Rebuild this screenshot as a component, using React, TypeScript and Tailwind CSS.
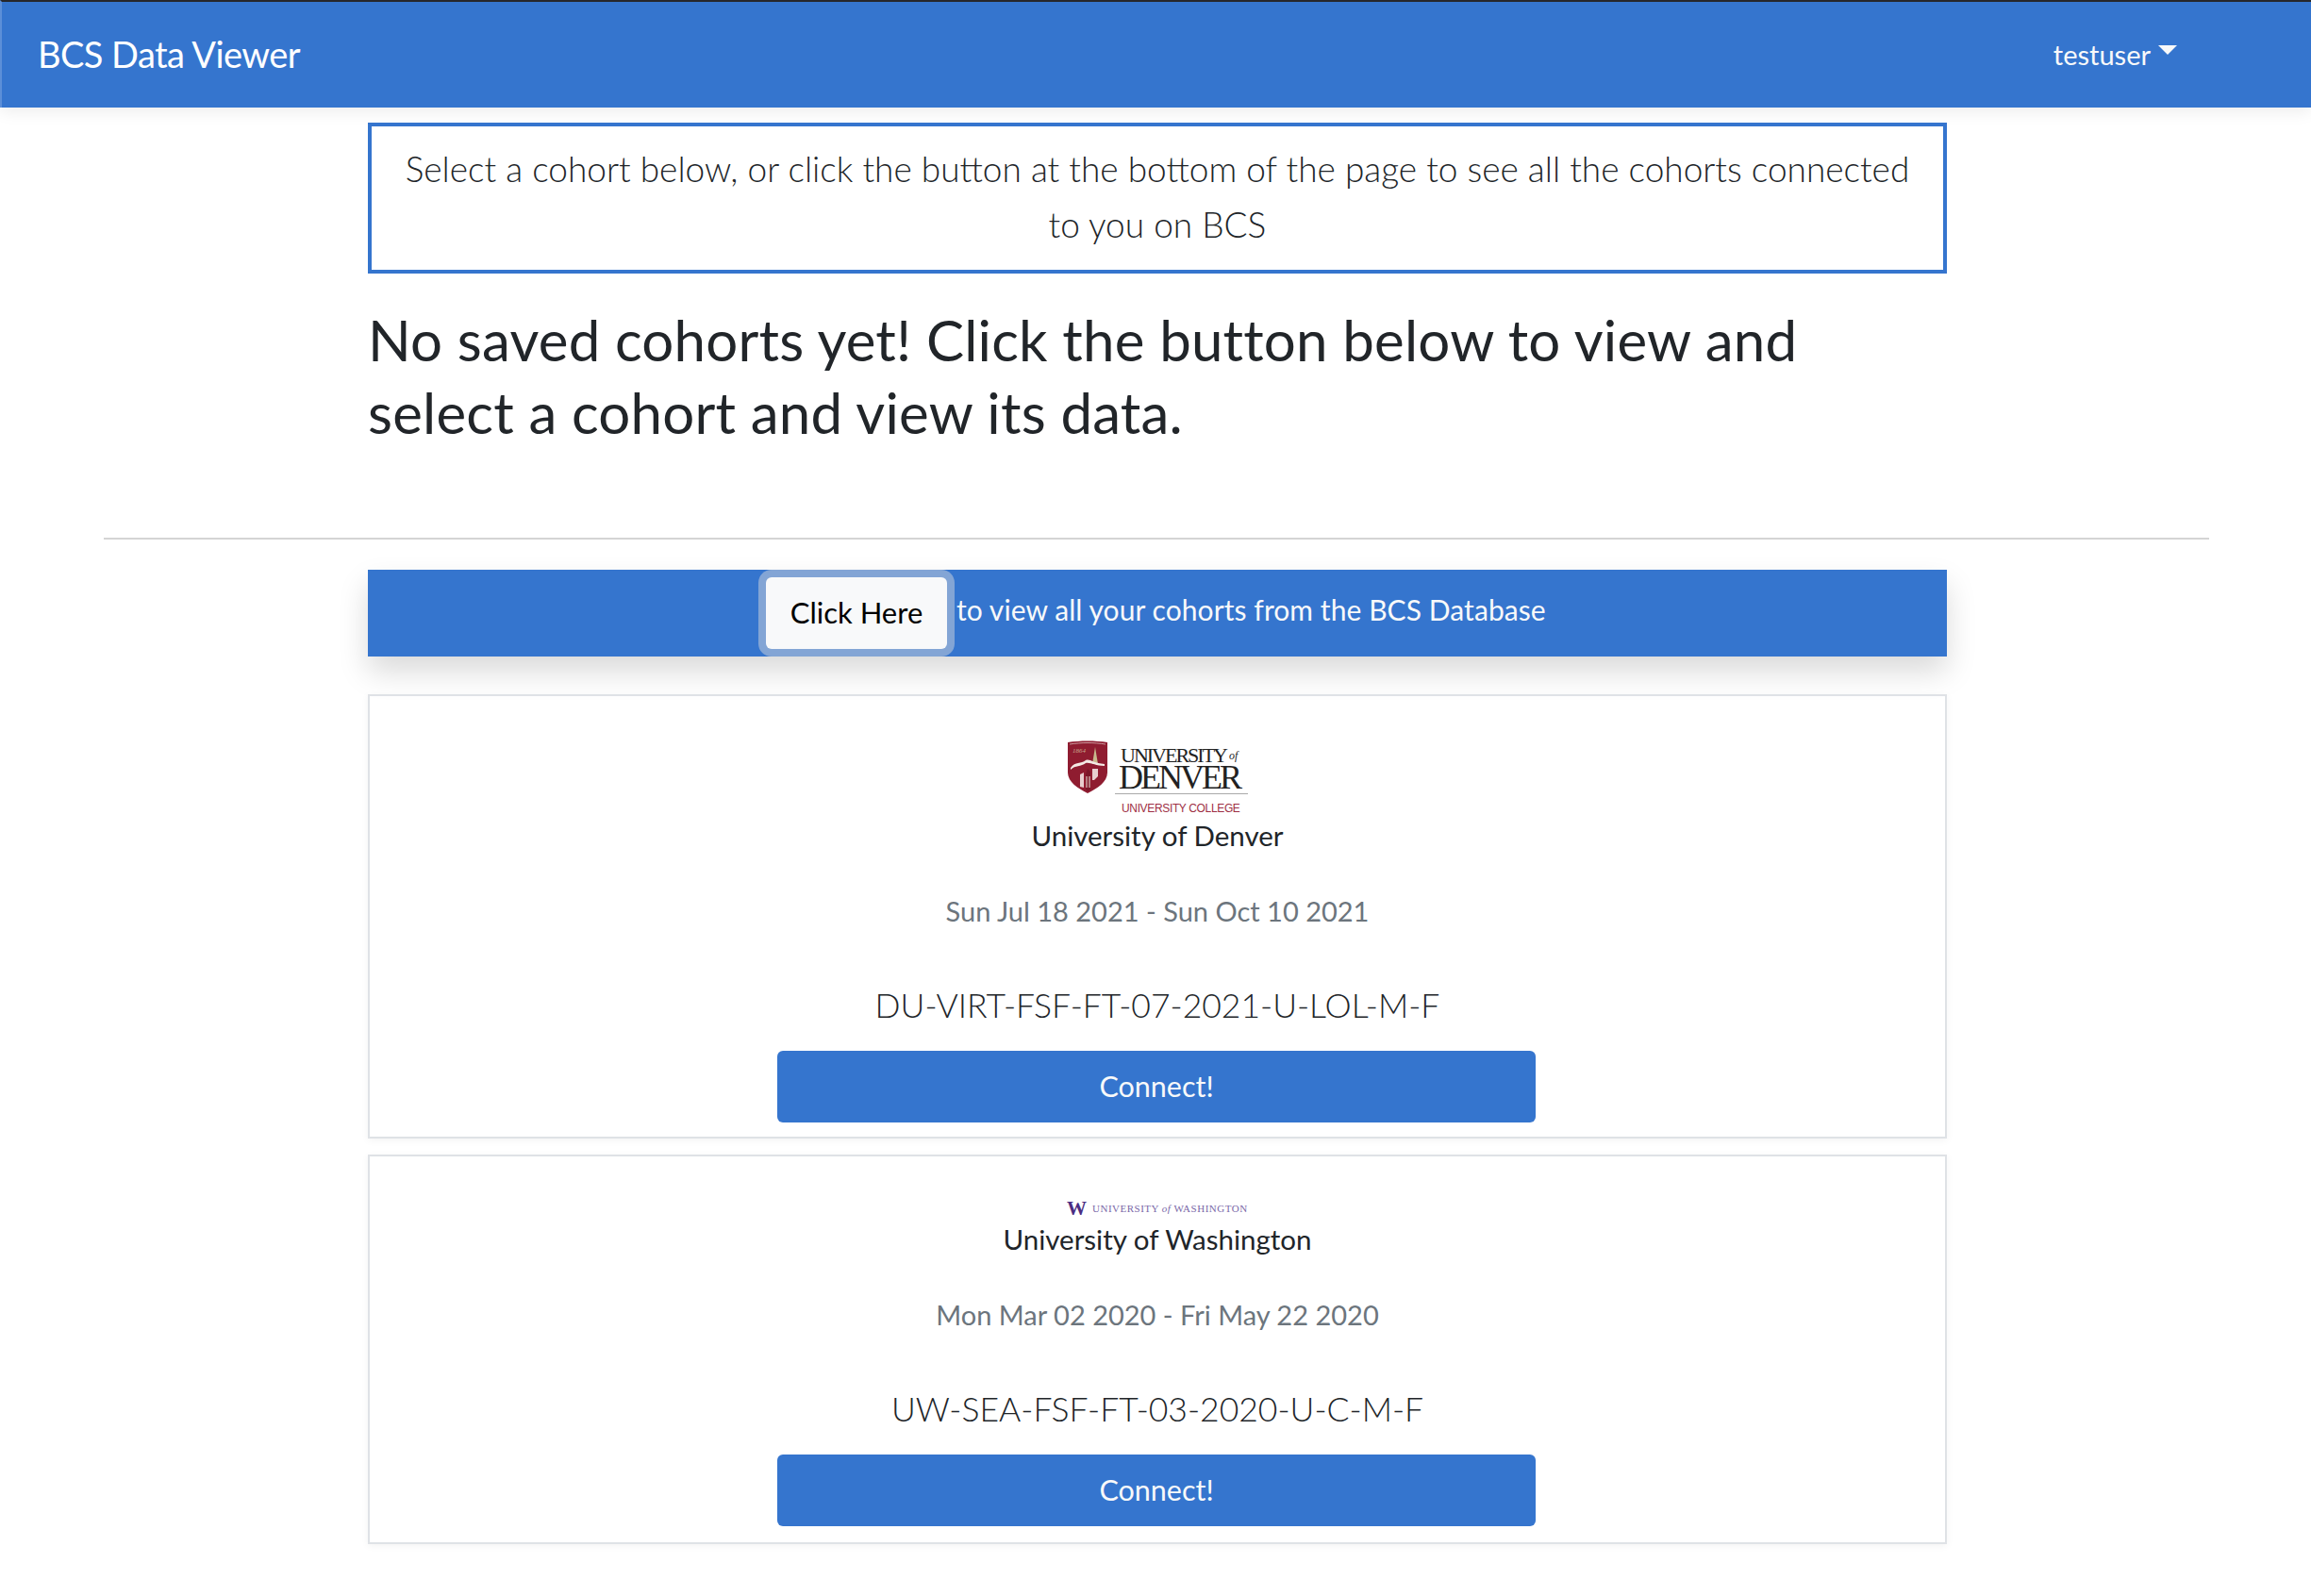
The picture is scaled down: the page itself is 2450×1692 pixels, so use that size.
const sans = "font-['Lato','Open_Sans',sans-serif]";

function DenverLogo() {
  return (
    <div className="flex h-[86px] w-[200px] items-start pl-[4px]">
      <svg width="44" height="57" viewBox="0 0 44 57" className="mt-[1px] shrink-0">
        <path d="M1 2 C14 0 30 0 43 2 L43 34 C43 44 32 51 22 56 C12 51 1 44 1 34 Z" fill="#8f1c30" />
        <path d="M3 4 C15 2 29 2 41 4" fill="none" stroke="#d9b9b9" strokeWidth="0.8" />
        <text x="6" y="13" fontSize="7" fontStyle="italic" fontFamily="Liberation Serif, serif" fill="#c9a98d">1864</text>
        <path d="M30 7 L33 25 L27 25 Z" fill="#c9b98d" />
        <path d="M4 29 C9 22 15 25 20 21 C24 19 28 24 40 25 L40 27 C30 27 25 23 20 24 C15 28 9 26 4 31 Z" fill="#f4e9e4" />
        <path d="M20 36 L22 30 L25 33 L25 52 L22 54 L20 52 Z" fill="#7b1628" />
        <path d="M14 49 L14 36 L18 34 L18 50 Z M27 30 L33 30 L33 38 L29 42 L27 42 Z" fill="#e8cfcf" />
        <path d="M21 38 L21 50 M24 38 L24 50" stroke="#f3e6da" strokeWidth="1" />
      </svg>
      <div className="ml-[7px] flex flex-col font-['Liberation_Serif',serif] text-[#222]">
        <div className="flex h-[27px] items-end pl-[6px] text-[22px] leading-[20px] tracking-[-2px]">
          UNIVERSITY<span className="ml-[3px] text-[12px] italic tracking-normal">of</span>
        </div>
        <div className="h-[27px] pl-[4px] text-[36px] leading-[27px] tracking-[-3px]">DENVER</div>
        <div className="mt-[3px] h-[1px] w-[141px] bg-[#aaa]" />
        <div className="pl-[7px] pt-[8px] font-['Liberation_Sans',sans-serif] text-[12px] leading-[15px] tracking-[-0.35px] text-[#9e3045]">UNIVERSITY COLLEGE</div>
      </div>
    </div>
  );
}

function WashingtonLogo() {
  return (
    <div className="flex h-[29px] w-[192px] items-start">
      <span className="font-['Liberation_Serif',serif] text-[21px] font-bold leading-[24px] text-[#4b2e83]">W</span>
      <span className="ml-[6px] whitespace-pre font-['Liberation_Serif',serif] text-[11px] leading-[24px] tracking-[0.5px] text-[#7a68a8]">
        UNIVERSITY <i>of</i> WASHINGTON
      </span>
    </div>
  );
}

function CohortCard({ logo, name, dates, code, className }: { logo: React.ReactNode; name: string; dates: string; code: string; className: string }) {
  return (
    <div className={`flex flex-col items-center border-2 border-[#dfe2e6] shadow-[0_2px_8px_rgba(0,0,0,0.05)] ${className}`}>
      {logo}
      <div className="text-[29.5px] leading-[32px] text-[#212529]">{name}</div>
      <div className="mt-[40px] text-[29px] leading-[48px] text-[#6c757d]">{dates}</div>
      <div className="mt-[52px] text-[35.5px] font-light leading-[48px] text-[#212529]">{code}</div>
      <button className="mr-[2px] mt-[24px] h-[76px] w-[804px] rounded-[6px] bg-[#3575ce] text-[30.5px] text-[#f8f9fa]">Connect!</button>
    </div>
  );
}

export default function App() {
  return (
    <div className={`min-h-[1692px] bg-white ${sans}`}>
      <header className="flex h-[114px] items-center justify-between border-t-2 border-l-2 border-t-[#26272b] border-l-[#5c8fd8] bg-[#3575ce] pl-[38px] pr-[142px] shadow-[0_4px_16px_rgba(0,0,0,0.08)]">
        <div className="-mt-[3px] text-[38px] leading-[48px] tracking-[-0.55px] text-white">BCS Data Viewer</div>
        <div className="flex items-start text-[29px] leading-[36px] text-[#f8f9fa]">
          testuser
          <span className="ml-[8px] mt-[8px] h-0 w-0 border-x-[10px] border-t-[10px] border-x-transparent border-t-[#f8f9fa]" />
        </div>
      </header>
      <main className="ml-[110px] flex w-[2234px] flex-col items-center">
        <div className="mt-[16px] h-[160px] w-[1674px] border-4 border-[#3575ce] px-[26px] pt-[15px] text-center text-[37px] font-light leading-[59px] text-[#212529]">
          Select a cohort below, or click the button at the bottom of the page to see all the cohorts connected to you on BCS
        </div>
        <div className="mt-[32px] h-[248px] w-[1674px]">
          <h2 className="w-[1600px] text-[60px] font-normal leading-[76.5px] tracking-[0.2px] text-[#212529]">
            No saved cohorts yet! Click the button below to view and select a cohort and view its data.
          </h2>
        </div>
        <hr className="mr-[2px] w-[2232px] border-t-2 border-[#d4d4d4]" />
        <div className="mt-[32px] flex h-[92px] w-[1674px] items-center bg-[#3575ce] pl-[422px] shadow-[0_16px_32px_rgba(0,0,0,0.15)]">
          <button className="h-[76px] w-[192px] rounded-[6px] bg-[#f8f9fa] pb-[2px] text-[31px] text-black shadow-[0_0_0_8px_#83a5d5]">Click Here</button>
          <span className="-mt-[8px] ml-[10px] text-[30px] leading-[48px] tracking-[0.07px] text-[#f8f9fa]">to view all your cohorts from the BCS Database</span>
        </div>
        <div className="flex w-[1674px] flex-col">
          <CohortCard className="mt-[40px] h-[471px] pt-[46px]" logo={<DenverLogo />} name="University of Denver" dates="Sun Jul 18 2021 - Sun Oct 10 2021" code="DU-VIRT-FSF-FT-07-2021-U-LOL-M-F" />
          <CohortCard className="mt-[17px] h-[413px] pt-[43px]" logo={<WashingtonLogo />} name="University of Washington" dates="Mon Mar 02 2020 - Fri May 22 2020" code="UW-SEA-FSF-FT-03-2020-U-C-M-F" />
        </div>
      </main>
    </div>
  );
}
